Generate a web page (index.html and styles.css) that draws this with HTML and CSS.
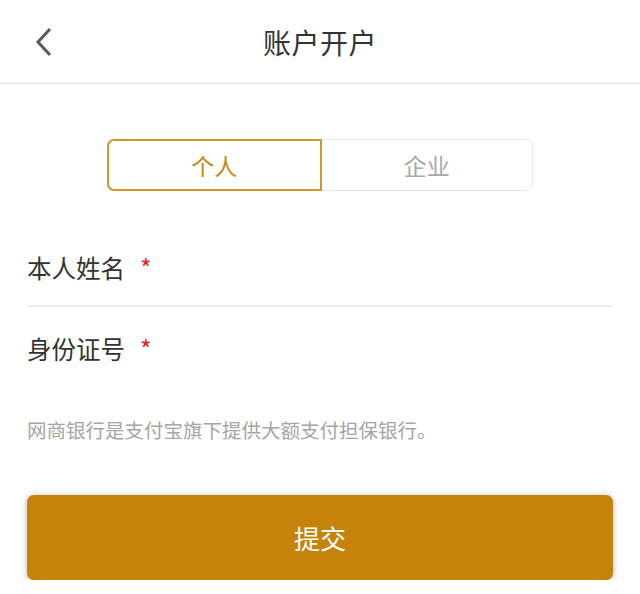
FILE: index.html
```html
<!DOCTYPE html>
<html lang="zh-CN">
<head>
<meta charset="utf-8">
<title>账户开户</title>
<link rel="stylesheet" href="styles.css">
</head>
<body>
<header class="topbar">
  <div class="back">
    <svg width="20" height="32" viewBox="0 0 20 32"><path d="M16 3 L4 16 L16 29" fill="none" stroke="#5a5a5a" stroke-width="3"/></svg>
  </div>
  <div class="title">账户开户</div>
  <div></div>
</header>
<main class="content">
  <div class="segment">
    <div class="seg seg-active">个人</div>
    <div class="seg seg-idle">企业</div>
  </div>
  <div class="form">
    <div class="field field-line"><span class="label">本人姓名</span><span class="req">*</span></div>
    <div class="field"><span class="label">身份证号</span><span class="req">*</span></div>
    <p class="hint">网商银行是支付宝旗下提供大额支付担保银行。</p>
    <button class="submit">提交</button>
  </div>
</main>
</body>
</html>
```
FILE: styles.css
```css
* { box-sizing: border-box; }
body {
  margin: 0;
  background: #fff;
  font-family: "Noto Sans CJK SC", "Noto Sans", sans-serif;
  color: #333;
}
.topbar {
  height: 84px;
  border-bottom: 1px solid #e6e6e6;
  display: grid;
  grid-template-columns: 1fr auto 1fr;
  align-items: center;
}
.back {
  padding-left: 34px;
  display: flex;
  align-items: center;
  height: 100%;
}
.title {
  font-size: 28px;
  color: #333;
  line-height: 1;
  letter-spacing: 0.5px;
}
.segment {
  margin: 55px auto 0;
  width: 426px;
  height: 52px;
  display: flex;
}
.seg {
  flex: 1;
  display: flex;
  align-items: center;
  justify-content: center;
  font-size: 23px;
}
.seg-active {
  border: 2px solid #d4952c;
  border-radius: 7px 0 0 7px;
  color: #c98712;
}
.seg-idle {
  border: 1px solid #e8e8e8;
  border-left: none;
  border-radius: 0 7px 7px 0;
  color: #a8a8a8;
}
.form {
  padding: 0 27px;
  margin-top: 38px;
}
.field {
  height: 78px;
  display: flex;
  align-items: center;
  font-size: 24.5px;
  color: #333;
}
.field-line {
  border-bottom: 2px solid #ececec;
}
.field + .field { height: 82px; }
.req {
  color: #e8221d;
  margin-left: 15px;
  font-size: 25px;
}
.hint {
  margin: 27px 0 0;
  font-size: 19.5px;
  line-height: 28px;
  color: #a6a6a6;
}
.submit {
  display: flex;
  align-items: center;
  justify-content: center;
  width: 100%;
  height: 85px;
  margin-top: 51px;
  border: none;
  border-radius: 7px;
  background: #c6830a;
  color: #fff;
  font-family: inherit;
  font-size: 26px;
  box-shadow: 0 1px 6px rgba(0,0,0,0.3);
}
```
